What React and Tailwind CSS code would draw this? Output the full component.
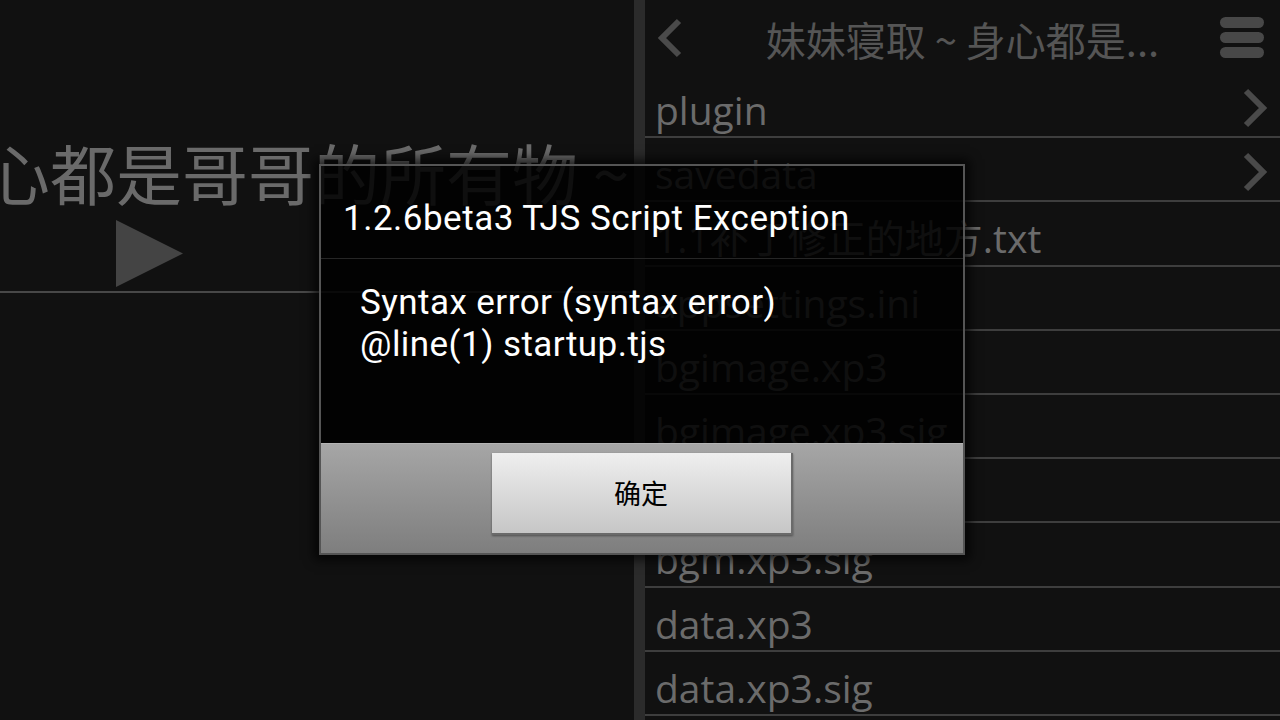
import React from 'react';

const files = [
  { name: 'plugin', dir: true },
  { name: 'savedata', dir: true },
  { name: '1.1补丁修正的地方.txt' },
  { name: 'appsettings.ini' },
  { name: 'bgimage.xp3' },
  { name: 'bgimage.xp3.sig' },
  { name: 'bgm.xp3' },
  { name: 'bgm.xp3.sig' },
  { name: 'data.xp3' },
  { name: 'data.xp3.sig' },
  { name: 'fgimage.xp3' },
];

const cjk = '[font-family:"Noto_Sans_CJK_SC",sans-serif]';

const Chevron = ({ left }) => (
  <svg width="26" height="40" viewBox="0 0 26 40" className="block">
    <path
      d={left ? 'M22 3 L5 20 L22 37' : 'M4 3 L21 20 L4 37'}
      fill="none"
      stroke="#4a4a4a"
      strokeWidth="6"
    />
  </svg>
);

const FileRow = ({ file }) => (
  <div className="shrink-0 h-[64.2px] border-b-2 border-[#3e3e3e] flex items-start pl-[10px] pr-[12px] pt-[12px]">
    <span className="flex-1 whitespace-nowrap text-[39px] leading-[48px] text-[#6b6b6b] [font-family:'Open_Sans','Noto_Sans_CJK_SC',sans-serif]">
      {file.name}
    </span>
    {file.dir && (
      <div className="pt-[2px]">
        <Chevron />
      </div>
    )}
  </div>
);

const ErrorDialog = () => (
  <div className="absolute left-[319px] top-[164px] w-[646px] h-[391px] border-2 border-[#555] flex flex-col shadow-[0_0_10px_5px_rgba(0,0,0,0.7)] [font-family:Roboto,'Noto_Sans_CJK_SC',sans-serif]">
    <div className="h-[93px] bg-black/[0.86] border-b border-[#262626] pl-[22px] pt-[32px]">
      <p className="text-[35px] leading-[41px] tracking-[0.5px] text-white whitespace-nowrap">1.2.6beta3 TJS Script Exception</p>
    </div>
    <div className="flex-1 bg-black/[0.86] pl-[39px] pt-[23px]">
      <p className="text-[35px] leading-[42px] tracking-[0.45px] text-white">Syntax error (syntax error)</p>
      <p className="text-[35px] leading-[42px] tracking-[0.45px] text-white">@line(1) startup.tjs</p>
    </div>
    <div className="h-[110px] border-t border-[#b4b4b4] bg-gradient-to-b from-[#a6a6a6] to-[#7e7e7e] flex justify-center pt-[9px]">
      <button className="w-[301px] h-[82px] bg-gradient-to-b from-[#efefef] to-[#c6c6c6] border-b-2 border-r-2 border-[#6a6a6a] shadow-[0_1px_2px_rgba(0,0,0,0.4)] flex items-center justify-center">
        <span className={`text-[27px] text-black ${cjk}`}>确定</span>
      </button>
    </div>
  </div>
);

export default function App() {
  return (
    <div className="relative w-[1280px] h-[720px] overflow-hidden bg-[#111111] flex">
      {/* left: game info */}
      <div className="w-[634px] shrink-0 flex flex-col overflow-hidden">
        <div className={`mt-[138px] h-[66px] text-[66px] leading-none text-[#6a6a6a] whitespace-nowrap -ml-[82px] ${cjk}`}>
          身心都是哥哥的所有物 ~
        </div>
        <div className="mt-[16px] ml-[116px]">
          <svg width="67" height="67" viewBox="0 0 67 67" className="block">
            <path d="M0 0 L67 33.5 L0 67 Z" fill="#444" />
          </svg>
        </div>
        <div className="mt-[4px] h-[2px] bg-[#484848]" />
      </div>

      <div className="w-[11px] shrink-0 bg-[#2b2b2b]" />

      {/* right: file browser */}
      <div className="flex-1 flex flex-col">
        <div className="shrink-0 h-[74px] grid grid-cols-[80px_1fr_80px]">
          <div className="pl-[12px] pt-[18px]">
            <Chevron left />
          </div>
          <div className={`pt-[19px] text-center text-[40px] leading-none text-[#555] whitespace-nowrap ${cjk}`}>
            妹妹寝取 ~ 身心都是...
          </div>
          <div className="flex justify-end pr-[16px] pt-[17px]">
            <div className="w-[44px] flex flex-col gap-[4px]">
              <div className="h-[11px] rounded-[6px] bg-[#484848]" />
              <div className="h-[11px] rounded-[6px] bg-[#484848]" />
              <div className="h-[11px] rounded-[6px] bg-[#484848]" />
            </div>
          </div>
        </div>
        {files.map((f) => (
          <FileRow key={f.name} file={f} />
        ))}
      </div>

      <ErrorDialog />
    </div>
  );
}
